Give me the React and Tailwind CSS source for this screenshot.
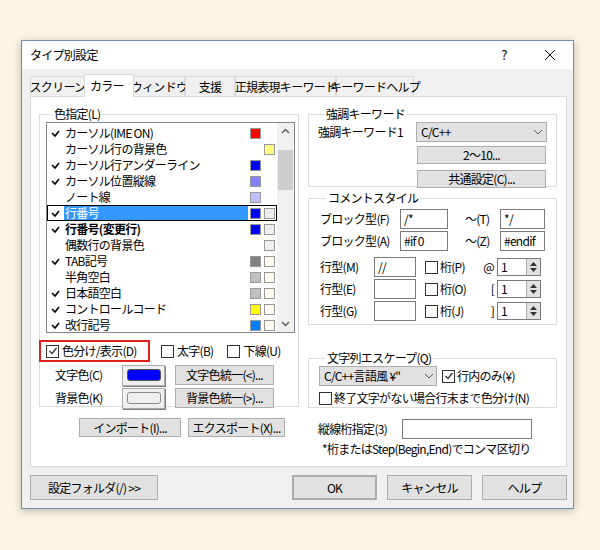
import React from 'react';

const rows = [
  { c: true, t: 'カーソル(IME ON)', a: '#ff0000', b: null },
  { c: false, t: 'カーソル行の背景色', a: null, b: '#ffff80' },
  { c: true, t: 'カーソル行アンダーライン', a: '#0000ff', b: null },
  { c: true, t: 'カーソル位置縦線', a: '#8080ff', b: null },
  { c: false, t: 'ノート線', a: '#c0c0ff', b: null },
  { c: true, t: '行番号', a: '#0000ff', b: '#eeeeee', sel: true },
  { c: true, t: '行番号(変更行)', a: '#0000ff', b: '#eeeeee', bold: true },
  { c: false, t: '偶数行の背景色', a: null, b: '#f0f0f0' },
  { c: true, t: 'TAB記号', a: '#808080', b: '#fffbf0' },
  { c: false, t: '半角空白', a: '#c0c0c0', b: '#fffbf0' },
  { c: true, t: '日本語空白', a: '#c0c0c0', b: '#fffbf0' },
  { c: true, t: 'コントロールコード', a: '#ffff00', b: '#fffbf0' },
  { c: true, t: '改行記号', a: '#0080ff', b: '#fffbf0' },
];

const Btn = ({ className = '', children }) => (
  <div className={`flex items-center justify-center border border-[#adadad] bg-[#e1e1e1] ${className}`}>{children}</div>
);

const Box = ({ checked }) => (
  <span className="inline-flex w-[13px] h-[13px] border border-[#333] bg-white items-center justify-center shrink-0">
    {checked && (
      <svg width="10" height="10" viewBox="0 0 10 10"><path d="M1.5 5 L4 7.5 L8.5 2" fill="none" stroke="#333" strokeWidth="1.3" /></svg>
    )}
  </span>
);

const Group = ({ label, className = '', children }) => (
  <fieldset className={`border border-[#dcdcdc] ${className}`}>
    <legend className="ml-[6px] px-[2px] leading-[14px]">{label}</legend>
    {children}
  </fieldset>
);

const Input = ({ className = '', children }) => (
  <div className={`h-[20px] border border-[#7a7a7a] bg-white px-[3px] leading-[18px] ${className}`}>{children}</div>
);

const Spin = () => (
  <div className="flex h-[18px] w-[44px] border border-[#7a7a7a] bg-white">
    <span className="flex-1 pl-[3px] leading-[16px]">1</span>
    <span className="w-[14px] bg-[#e1e1e1] border-l border-[#adadad] flex flex-col items-center justify-center gap-[2px]">
      <svg width="7" height="4"><path d="M0 4 L3.5 0 L7 4Z" fill="#333" /></svg>
      <svg width="7" height="4"><path d="M0 0 L3.5 4 L7 0Z" fill="#333" /></svg>
    </span>
  </div>
);

export default function App() {
  const tabs = [['スクリーン', 55], ['カラー', 50], ['ウィンドウ', 52], ['支援', 50], ['正規表現キーワード', 101], ['キーワードヘルプ', 78]];
  return (
    <div className="w-[600px] h-[550px] bg-[#fbf5e6] pt-[40px] pl-[21px] text-[12px] text-black whitespace-nowrap tracking-[-0.06em]" style={{ fontFamily: '"Noto Sans CJK JP", "Noto Sans", sans-serif' }}>
      <div className="w-[553px] h-[469px] bg-[#f0f0f0] border border-[#6f8fb0] shadow-[0_2px_8px_rgba(0,0,0,0.25)] flex flex-col">
        <div className="h-[28px] bg-white flex items-center pl-[8px] text-[12px]">
          <span className="flex-1">タイプ別設定</span>
          <span className="w-[46px] text-center text-[13px]">?</span>
          <span className="w-[46px] flex justify-center">
            <svg width="10" height="10"><path d="M0 0 L10 10 M10 0 L0 10" stroke="#000" strokeWidth="1" /></svg>
          </span>
        </div>
        <div className="pl-[8px] pt-[5px]">
          <div className="flex items-end h-[22px]">
            {tabs.map(([t, w], i) => (
              <div key={t} style={{ width: w }} className={i === 1 ? 'h-[23px] bg-white border border-b-0 border-[#d9d9d9] pl-[5px] pt-[2px] relative top-[1px] -mx-[1px]' : 'h-[20px] border border-b-0 border-[#d9d9d9] bg-[#f0f0f0] flex items-center justify-center'}>{t}</div>
            ))}
          </div>
          <div className="w-[537px] h-[371px] bg-white border border-[#d9d9d9] flex pl-[8px] pt-[10px] gap-[9px]">
            <div className="w-[260px] flex flex-col">
              <Group label="色指定(L)" className="h-[300px] pl-[6px] pb-[8px] pr-[2px]">
                <div className="h-[211px] w-[249px] border border-[#828790] flex mt-[1px]">
                  <div className="flex-1 pt-[2px]">
                    {rows.map((r) => (
                      <div key={r.t} className={`h-[16px] flex items-center ${r.sel ? 'outline outline-1 outline-black -outline-offset-1' : ''}`}>
                        <span className="w-[17px] flex justify-center">
                          {r.c && <svg width="9" height="7"><path d="M1 3 L4 6 L8 1" fill="none" stroke="#000" strokeWidth="1.6" /></svg>}
                        </span>
                        <span className={`flex-1 h-[14px] leading-[14px] pl-[1px] ${r.sel ? 'bg-[#3399ff] text-white' : ''} ${r.bold ? 'font-bold' : ''}`}>{r.t}</span>
                        <span className="w-[11px] h-[11px] ml-[2px] border" style={{ background: r.a || 'transparent', borderColor: r.a ? '#999' : 'transparent' }} />
                        <span className="w-[11px] h-[11px] ml-[3px] mr-[2px] border" style={{ background: r.b || 'transparent', borderColor: r.b ? '#999' : 'transparent' }} />
                      </div>
                    ))}
                  </div>
                  <div className="w-[17px] bg-[#f0f0f0] flex flex-col items-center">
                    <svg width="17" height="17"><path d="M5 10 L8.5 6.5 L12 10" fill="none" stroke="#606060" strokeWidth="1.5" /></svg>
                    <div className="w-[15px] h-[40px] bg-[#cdcdcd] mt-[10px]" />
                    <div className="flex-1" />
                    <svg width="17" height="17"><path d="M5 7 L8.5 10.5 L12 7" fill="none" stroke="#606060" strokeWidth="1.5" /></svg>
                  </div>
                </div>
                <div className="flex items-center mt-[7px] -ml-[7px] h-[22px]">
                  <div className="w-[111px] h-[22px] border-2 border-[#e0201b] flex items-center pl-[5px] gap-[3px]"><Box checked />色分け/表示(D)</div>
                  <div className="flex items-center gap-[3px] ml-[11px]"><Box />太字(B)</div>
                  <div className="flex items-center gap-[3px] ml-[14px]"><Box />下線(U)</div>
                </div>
                <div className="flex items-center mt-[2px] h-[22px]">
                  <span className="w-[76px] pl-[9px]">文字色(C)</span>
                  <Btn className="w-[43px] h-[21px] bg-[#f0f0f0] shadow-[1px_1px_0_#808080]"><span className="w-[34px] h-[12px] bg-[#0000ff] rounded-[3px] border border-[#555]" /></Btn>
                  <Btn className="w-[99px] h-[20px] ml-[10px]">文字色統一(&lt;)...</Btn>
                </div>
                <div className="flex items-center mt-[1px] h-[22px]">
                  <span className="w-[76px] pl-[9px]">背景色(K)</span>
                  <Btn className="w-[43px] h-[21px] bg-[#f0f0f0] shadow-[1px_1px_0_#808080]"><span className="w-[34px] h-[12px] bg-[#f0f0f0] rounded-[3px] border border-[#888]" /></Btn>
                  <Btn className="w-[99px] h-[20px] ml-[10px]">背景色統一(&gt;)...</Btn>
                </div>
              </Group>
              <div className="flex mt-[11px] ml-[40px] gap-[7px]">
                <Btn className="w-[102px] h-[19px]">インポート(I)...</Btn>
                <Btn className="w-[97px] h-[19px]">エクスポート(X)...</Btn>
              </div>
            </div>
            <div className="w-[249px] flex flex-col">
              <Group label="強調キーワード" className="h-[80px] pl-[9px]">
                <div className="flex items-center h-[20px] mt-[1px]">
                  <span className="w-[98px]">強調キーワード1</span>
                  <div className="w-[131px] h-[20px] border border-[#adadad] bg-[#e1e1e1] flex items-center pl-[4px]">
                    <span className="flex-1">C/C++</span>
                    <svg width="16" height="8"><path d="M4 2 L8 6 L12 2" fill="none" stroke="#555" strokeWidth="1" /></svg>
                  </div>
                </div>
                <Btn className="w-[129px] h-[18px] ml-[99px] mt-[4px]">2〜10...</Btn>
                <Btn className="w-[129px] h-[18px] ml-[99px] mt-[6px]">共通設定(C)...</Btn>
              </Group>
              <Group label="コメントスタイル" className="h-[134px] mt-[4px] pl-[11px]">
                <div className="flex items-center mt-[4px]">
                  <span className="w-[80px]">ブロック型(F)</span>
                  <Input className="w-[48px]">/*</Input>
                  <span className="w-[52px] pl-[17px]">〜(T)</span>
                  <Input className="w-[45px]">*/</Input>
                </div>
                <div className="flex items-center mt-[2px]">
                  <span className="w-[80px]">ブロック型(A)</span>
                  <Input className="w-[48px]">#if 0</Input>
                  <span className="w-[52px] pl-[17px]">〜(Z)</span>
                  <Input className="w-[45px]">#endif</Input>
                </div>
                {[['行型(M)', '//', '桁(P)', '@'], ['行型(E)', '', '桁(O)', '['], ['行型(G)', '', '桁(J)', ']']].map(([a, v, c, s], i) => (
                  <div key={a} className={`flex items-center ${i === 0 ? 'mt-[6px]' : 'mt-[2px]'}`}>
                    <span className="w-[54px]">{a}</span>
                    <Input className="w-[42px]">{v}</Input>
                    <span className="flex items-center gap-[2px] ml-[9px] w-[58px]"><Box />{c}</span>
                    <span className="w-[14px] text-right pr-[3px]">{s}</span>
                    <Spin />
                  </div>
                ))}
              </Group>
              <Group label="文字列エスケープ(Q)" className="h-[57px] mt-[26px] pl-[10px]">
                <div className="flex items-center mt-[1px]">
                  <div className="w-[118px] h-[20px] border border-[#adadad] bg-[#e1e1e1] flex items-center pl-[4px]">
                    <span className="flex-1">C/C++言語風 ¥"</span>
                    <svg width="14" height="8"><path d="M3 2 L7 6 L11 2" fill="none" stroke="#555" strokeWidth="1" /></svg>
                  </div>
                  <span className="flex items-center gap-[2px] ml-[5px]"><Box checked />行内のみ(¥)</span>
                </div>
                <div className="flex items-center gap-[2px] mt-[3px]"><Box />終了文字がない場合行末まで色分け(N)</div>
              </Group>
              <div className="flex items-center mt-[11px] ml-[10px]">
                <span className="w-[84px]">縦線桁指定(3)</span>
                <Input className="w-[130px]" />
              </div>
              <div className="ml-[14px] mt-[1px]">*桁またはStep(Begin,End)でコンマ区切り</div>
            </div>
          </div>
          <div className="flex mt-[8px] w-[537px]">
            <Btn className="w-[128px] h-[25px]">設定フォルダ(/) &gt;&gt;</Btn>
            <div className="flex-1" />
            <Btn className="w-[85px] h-[25px] border-2 border-[#0078d7]">OK</Btn>
            <Btn className="w-[85px] h-[25px] ml-[10px]">キャンセル</Btn>
            <Btn className="w-[85px] h-[25px] ml-[10px]">ヘルプ</Btn>
          </div>
        </div>
      </div>
    </div>
  );
}
